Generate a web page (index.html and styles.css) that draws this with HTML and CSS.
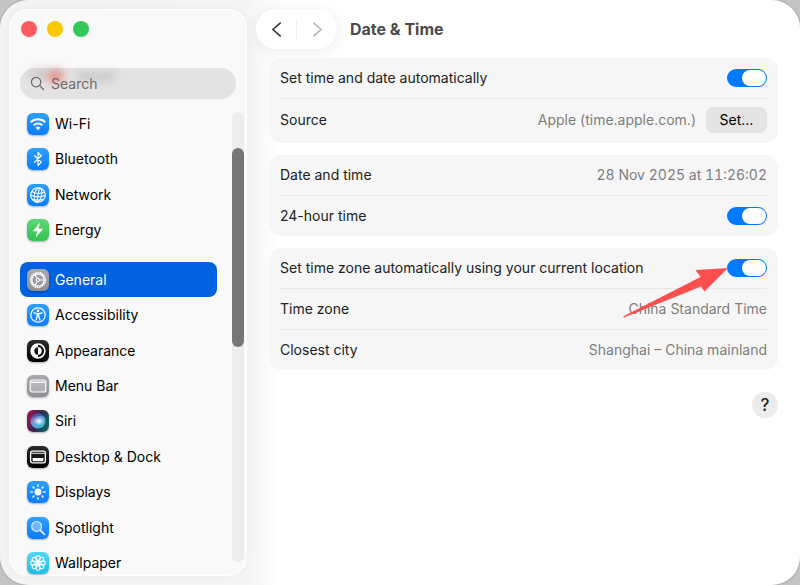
FILE: index.html
```html
<!DOCTYPE html>
<html lang="en">
<head>
  <meta charset="UTF-8" />
  <meta name="viewport" content="width=device-width, initial-scale=1.0"/>
  <title>Date & Time</title>
  <link rel="stylesheet" href="styles.css">
</head>
<body>
  <div class="window">
    <!-- Sidebar -->
    <aside class="sidebar">
      <div class="traffic-lights">
        <button class="light close" aria-label="Close"></button>
        <button class="light minimize" aria-label="Minimize"></button>
        <button class="light zoom" aria-label="Zoom"></button>
      </div>

      <div class="search">
        <span class="smudge smudge-dark"></span>
        <span class="smudge smudge-red"></span>
        <span class="smudge smudge-text"></span>
        <svg class="search-icon" viewBox="0 0 16 16" aria-hidden="true"><circle cx="6.5" cy="6.5" r="5"/><path d="M10.2 10.2L14.4 14.4"/></svg>
        <input type="search" placeholder="Search" aria-label="Search" />
      </div>

      <div class="scroll-area">
        <nav class="nav">
          <a href="#" class="nav-item">
            <svg class="icon blue" viewBox="0 0 22 22"><g fill="none" stroke="#fff" stroke-width="2"><path d="M3.8 9.3a10.2 10.2 0 0 1 14.4 0"/><path d="M6.7 12.3a6.1 6.1 0 0 1 8.6 0"/></g><path fill="#fff" d="M11 17.2l-2.4-2.5a3.4 3.4 0 0 1 4.8 0z"/></svg>
            Wi-Fi
          </a>
          <a href="#" class="nav-item">
            <svg class="icon blue" viewBox="0 0 22 22"><path fill="none" stroke="#fff" stroke-width="1.2" stroke-linejoin="round" stroke-linecap="round" d="M7.6 7.7l6.6 6.4-3.2 3.4V4.500l3.200 3.400-6.600 6.400"/></svg>
            Bluetooth
          </a>
          <a href="#" class="nav-item">
            <svg class="icon blue" viewBox="0 0 22 22"><g fill="none" stroke="#fff" stroke-width="1.1"><circle cx="11" cy="11" r="7.3"/><ellipse cx="11" cy="11" rx="3.6" ry="7.3" transform="rotate(12 11 11)"/><path d="M12.4 3.8L9.6 18.2M4.6 7.4c3.6 2 9 2.6 13 .6M3.7 11.2c4.6 2 10 2.2 14.6.4M5.1 15.2c3.6 1 8 1.2 11.6.2"/></g></svg>
            Network
          </a>
          <a href="#" class="nav-item">
            <svg class="icon green" viewBox="0 0 22 22"><path fill="#fff" d="M12.9 3.6L5.7 12.2h4.4l-1.4 6.4 7.5-8.9h-4.5z"/></svg>
            Energy
          </a>
          <a href="#" class="nav-item group-start selected" aria-current="page">
            <svg class="icon gray" viewBox="0 0 22 22"><g fill="none" stroke="#fff"><circle cx="11" cy="11" r="7.4" stroke-width="1.7" stroke-dasharray="1.35 .587"/><circle cx="11" cy="11" r="6.2" stroke-width="1.2"/><circle cx="11" cy="11" r="1.6" stroke-width="1"/><path stroke-width="1.1" d="M12.6 11h4.6M10.2 9.6L7.9 5.6M10.2 12.4l-2.3 4"/></g></svg>
            General
          </a>
          <a href="#" class="nav-item">
            <svg class="icon blue" viewBox="0 0 22 22"><circle cx="11" cy="11" r="7.2" fill="none" stroke="#fff" stroke-width="1.2"/><circle cx="11" cy="6.9" r="1.3" fill="#fff"/><path fill="none" stroke="#fff" stroke-width="1.3" stroke-linecap="round" stroke-linejoin="round" d="M6.9 8.9l3 .8h2.2l3-.8M10.3 9.9v2.4l-1.3 3.8M11.7 9.9v2.4l1.3 3.8M11 10v2"/></svg>
            Accessibility
          </a>
          <a href="#" class="nav-item">
            <svg class="icon black" viewBox="0 0 22 22"><circle cx="11" cy="11" r="6.9" fill="none" stroke="#fff" stroke-width="1.5"/><path fill="#fff" d="M11 4.1a6.9 6.9 0 0 0 0 13.8v-3.2a3.7 3.7 0 0 1 0-7.4z"/><path fill="#fff" d="M11 7.3a3.7 3.7 0 0 1 0 7.4z"/></svg>
            Appearance
          </a>
          <a href="#" class="nav-item">
            <svg class="icon gray" viewBox="0 0 22 22"><rect x="3.2" y="5" width="15.6" height="12" rx="2" fill="#fff" fill-opacity=".25" stroke="#fff" stroke-width="1.2"/><path stroke="#fff" stroke-width="1.4" d="M4 7.4h14"/></svg>
            Menu Bar
          </a>
          <a href="#" class="nav-item">
            <svg class="icon siri" viewBox="0 0 22 22">
              <defs>
                <linearGradient id="siriBg" x1="0" y1="0.3" x2="1" y2="0.7"><stop offset="0" stop-color="#a3144f"/><stop offset=".45" stop-color="#3c2350"/><stop offset="1" stop-color="#0b6a66"/></linearGradient>
                <linearGradient id="siriOrb" x1="0" y1="0" x2="1" y2="1"><stop offset="0" stop-color="#c33a78"/><stop offset=".45" stop-color="#6b9fe0"/><stop offset="1" stop-color="#24c5b4"/></linearGradient>
                <radialGradient id="siriGlow"><stop offset="0" stop-color="#fff"/><stop offset="1" stop-color="#fff" stop-opacity="0"/></radialGradient>
              </defs>
              <rect width="22" height="22" fill="url(#siriBg)"/>
              <circle cx="11" cy="11" r="7.6" fill="url(#siriOrb)"/>
              <path fill="#123f8c" fill-opacity=".55" d="M4 9c4-3 9-4 13.8-2A7.6 7.6 0 0 0 4 9z"/>
              <ellipse cx="12" cy="11.3" rx="5.5" ry="4.2" fill="url(#siriGlow)"/>
            </svg>
            Siri
          </a>
          <a href="#" class="nav-item">
            <svg class="icon black" viewBox="0 0 22 22"><rect x="3.6" y="5.2" width="14.8" height="11.6" rx="2" fill="none" stroke="#fff" stroke-width="1.3"/><path stroke="#bbb" stroke-width="1.2" d="M4 7.4h14"/><rect x="5.6" y="12" width="10.8" height="3.2" rx=".6" fill="#fff"/></svg>
            Desktop & Dock
          </a>
          <a href="#" class="nav-item">
            <svg class="icon blue" viewBox="0 0 22 22"><circle cx="11" cy="11" r="3.4" fill="#fff"/><path stroke="#fff" stroke-width="1.5" stroke-linecap="round" d="M11 4v1.3M11 16.7V18M4 11h1.3M16.7 11H18M6.05 6.05l.9.9M15.05 15.05l.9.9M6.05 15.95l.9-.9M15.05 6.95l.9-.9"/></svg>
            Displays
          </a>
          <a href="#" class="nav-item">
            <svg class="icon blue" viewBox="0 0 22 22"><circle cx="9.6" cy="9.4" r="4.9" fill="#fff" fill-opacity=".35" stroke="#d8ecff" stroke-width="1.2"/><path stroke="#d8ecff" stroke-width="1.8" stroke-linecap="round" d="M13.4 13.3l4 4"/></svg>
            Spotlight
          </a>
          <a href="#" class="nav-item">
            <svg class="icon cyan" viewBox="0 0 22 22"><g fill="none" stroke="#fff" stroke-width="1.1"><circle cx="11" cy="5.9" r="2.2"/><circle cx="14.6" cy="7.4" r="2.2"/><circle cx="16.1" cy="11" r="2.2"/><circle cx="14.6" cy="14.6" r="2.2"/><circle cx="11" cy="16.1" r="2.2"/><circle cx="7.4" cy="14.6" r="2.2"/><circle cx="5.9" cy="11" r="2.2"/><circle cx="7.4" cy="7.4" r="2.2"/><path d="M11 8v6M8 11h6M8.9 8.9l4.2 4.2M13.1 8.9l-4.2 4.2"/></g></svg>
            Wallpaper
          </a>
        </nav>
        <div class="scrollbar"><div class="thumb"></div></div>
      </div>
    </aside>

    <!-- Content -->
    <main class="content">
      <header class="toolbar">
        <div class="history">
          <button class="history-btn" aria-label="Back"><svg viewBox="0 0 12 18"><path d="M10 2L2 9l8 7"/></svg></button>
          <button class="history-btn forward" aria-label="Forward" disabled><svg viewBox="0 0 12 18"><path d="M2 2l8 7-8 7"/></svg></button>
        </div>
        <h1>Date & Time</h1>
      </header>

      <div class="cards">
        <section class="card">
          <div class="row">
            <label for="autoTime">Set time and date automatically</label>
            <input type="checkbox" class="toggle" id="autoTime" checked />
          </div>
          <div class="row source">
            <span>Source</span>
            <span class="value">Apple (time.apple.com.)</span>
            <button class="set-btn">Set...</button>
          </div>
        </section>

        <section class="card">
          <div class="row">
            <span>Date and time</span>
            <span class="value clock">28 Nov 2025 at 11:26:02</span>
          </div>
          <div class="row">
            <label for="hour24">24-hour time</label>
            <input type="checkbox" class="toggle" id="hour24" checked />
          </div>
        </section>

        <section class="card">
          <div class="row">
            <label for="autoZone">Set time zone automatically using your current location</label>
            <span class="toggle-wrap">
              <input type="checkbox" class="toggle" id="autoZone" checked />
              <svg class="arrow" viewBox="0 0 106 52" aria-hidden="true"><path fill="#fc5050" d="M106 1L73.500 3l5 7L1 49.500l1 1L79 19.500l3.500 5z"/></svg>
            </span>
          </div>
          <div class="row">
            <span>Time zone</span>
            <span class="value">China Standard Time</span>
          </div>
          <div class="row">
            <span>Closest city</span>
            <span class="value">Shanghai – China mainland</span>
          </div>
        </section>
      </div>

      <button class="help" aria-label="Help">?</button>
    </main>
  </div>
</body>
</html>
```

FILE: styles.css
```css
:root {
  --blue: #007aff;
  --selected: #0062e1;
  --card-bg: #f6f6f6;
  --text: #222;
  --muted: #7e7e7e;
}

* {
  margin: 0;
  padding: 0;
  box-sizing: border-box;
  font-family: Inter, "Liberation Sans", sans-serif;
}

body {
  background-color: #c4c4c4;
  color: var(--text);
  font-size: 14px;
  line-height: 20px;
}

button {
  border: none;
  cursor: pointer;
}

.window {
  display: flex;
  height: 100vh;
  overflow: hidden;
  border-radius: 28px;
  background: linear-gradient(to right, #f3f3f3 0, #f5f5f5 248px, #fff 280px);
  box-shadow: 0 0 2px rgba(0, 0, 0, 0.4);
}

/* Sidebar */
.sidebar {
  display: flex;
  flex-direction: column;
  width: 238px;
  flex-shrink: 0;
  margin: 9px 0 9px 9px;
  padding: 12px 3px 0 11px;
  border-radius: 19px;
  background-color: #f9f9f9;
  box-shadow: inset 0 0 0 1px #fff, 0 0 8px rgba(0, 0, 0, 0.04);
  overflow: hidden;
}

.traffic-lights {
  display: flex;
  gap: 10px;
  padding-left: 1px;
}

.light {
  width: 16px;
  height: 16px;
  border-radius: 50%;
}

.close { background-color: #ff5a5f; }
.minimize { background-color: #fac800; }
.zoom { background-color: #34c759; }

.search {
  position: relative;
  display: flex;
  align-items: center;
  gap: 6px;
  height: 31px;
  margin: 31px 8px 0 0;
  padding: 0 10px;
  border-radius: 16px;
  background-color: #e4e3e3;
}

.search-icon {
  position: relative;
  width: 15px;
  height: 15px;
  flex-shrink: 0;
  fill: none;
  stroke: #6e6e6e;
  stroke-width: 1.4;
  stroke-linecap: round;
}

.search input {
  position: relative;
  width: 100%;
  border: none;
  outline: none;
  background: none;
  font-size: 14px;
}

.search input::placeholder {
  color: #6c6c6c;
}

/* scrolled content showing through the search field */
.smudge {
  position: absolute;
  border-radius: 8px;
  filter: blur(4px);
}

.smudge-dark {
  left: 8px;
  top: -1px;
  width: 34px;
  height: 12px;
  background-color: rgba(90, 80, 80, 0.14);
}

.smudge-red {
  left: 28px;
  top: 3px;
  width: 16px;
  height: 12px;
  background-color: rgba(255, 60, 40, 0.45);
}

.smudge-text {
  left: 56px;
  top: 5px;
  width: 40px;
  height: 7px;
  background-color: rgba(70, 70, 70, 0.2);
}

.scroll-area {
  display: flex;
  flex: 1;
  gap: 15px;
  min-height: 0;
  margin-top: 7px;
}

.nav {
  display: flex;
  flex-direction: column;
  flex: 1;
  margin-bottom: -5px;
}

.nav-item {
  display: flex;
  flex: 1;
  align-items: center;
  gap: 6px;
  padding-left: 7px;
  border-radius: 8px;
  color: #000;
  text-decoration: none;
}

.group-start {
  margin-top: 14px;
}

.selected {
  background-color: var(--selected);
  color: #fff;
}

.icon {
  width: 22px;
  height: 22px;
  border-radius: 6px;
  box-shadow: 0 1px 2px rgba(0, 0, 0, 0.3);
}

.blue { background: linear-gradient(#2ea0fc, #0a7cff); }
.green { background: linear-gradient(#5fd677, #30c350); }
.gray { background: linear-gradient(#a9a9ae, #8e8e93); }
.black { background: linear-gradient(#2c2c2c, #000); }
.cyan { background: linear-gradient(#54d8f4, #16bfe8); }

.scrollbar {
  width: 12px;
  margin: 6px 0 14px;
  padding-top: 36px;
  border-radius: 6px;
  background-color: #ededed;
}

.thumb {
  height: 48%;
  border-radius: 6px;
  background-color: #767676;
}

/* Content */
.content {
  display: flex;
  flex-direction: column;
  flex: 1;
  padding: 9px 22px 0 9px;
}

.toolbar {
  display: flex;
  align-items: center;
  gap: 13px;
}

.history {
  display: flex;
  width: 81px;
  height: 40px;
  padding: 10px 0;
  border-radius: 20px;
  background-color: #fff;
  box-shadow: 0 2px 16px rgba(0, 0, 0, 0.08);
}

.history-btn {
  display: flex;
  flex: 1;
  align-items: center;
  justify-content: center;
  background: none;
}

.history-btn svg {
  width: 11px;
  height: 17px;
  fill: none;
  stroke: #333;
  stroke-width: 1.8;
  stroke-linecap: round;
  stroke-linejoin: round;
}

.forward {
  border-left: 1px solid #eee;
}

.history-btn.forward svg {
  stroke: #b8b8b8;
}

h1 {
  color: #4b4b4b;
  font-size: 16px;
  font-weight: 700;
}

.cards {
  display: flex;
  flex-direction: column;
  gap: 12px;
  margin: 9px 0 0 13px;
}

.card {
  padding: 0 11px;
  border-radius: 13px;
  background-color: var(--card-bg);
}

.row {
  display: flex;
  align-items: center;
  justify-content: space-between;
  height: 40px;
}

.row + .row {
  height: 41px;
  border-top: 1px solid #e8e8e8;
}

.row + .source {
  height: 45px;
  padding-bottom: 3px;
}

.value {
  margin-left: auto;
  color: var(--muted);
}

.clock {
  font-variant-numeric: tabular-nums;
}

.set-btn {
  width: 61px;
  height: 26px;
  margin-left: 10px;
  border-radius: 7px;
  background-color: #e4e4e4;
  color: #000;
  font-size: 14px;
}

.toggle {
  display: block;
  width: 40px;
  height: 18px;
  padding: 1px;
  border-radius: 9px;
  background-color: #ccc;
  appearance: none;
  cursor: pointer;
}

.toggle::before {
  content: "";
  display: block;
  width: 24px;
  height: 16px;
  border-radius: 8px;
  background-color: #fff;
}

.toggle:checked {
  background-color: var(--blue);
}

.toggle:checked::before {
  margin-left: auto;
}

.toggle-wrap {
  position: relative;
}

/* pointer laid over the time zone switch */
.arrow {
  position: absolute;
  right: 39px;
  top: 8px;
  width: 106px;
  height: 52px;
  pointer-events: none;
}

.help {
  align-self: flex-end;
  width: 26px;
  height: 26px;
  margin-top: 22px;
  border-radius: 50%;
  background-color: #ececec;
  color: #222;
  font-size: 17px;
  font-weight: 500;
}
```
